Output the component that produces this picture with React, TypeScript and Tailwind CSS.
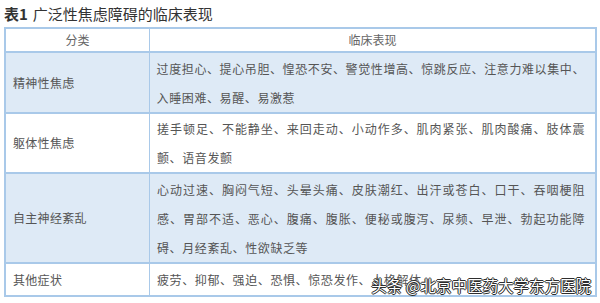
import React from "react";

const font = { fontFamily: '"Noto Sans CJK SC", "Noto Sans", sans-serif' };

type Row = { label: string; lines: string[]; blue: boolean; h: string };

const rows: Row[] = [
  {
    label: "精神性焦虑",
    lines: [
      "过度担心、提心吊胆、惶恐不安、警觉性增高、惊跳反应、注意力难以集中、",
      "入睡困难、易醒、易激惹",
    ],
    blue: true,
    h: "h-[61px]",
  },
  {
    label: "躯体性焦虑",
    lines: [
      "搓手顿足、不能静坐、来回走动、小动作多、肌肉紧张、肌肉酸痛、肢体震",
      "颤、语音发颤",
    ],
    blue: false,
    h: "h-[60px]",
  },
  {
    label: "自主神经紊乱",
    lines: [
      "心动过速、胸闷气短、头晕头痛、皮肤潮红、出汗或苍白、口干、吞咽梗阻",
      "感、胃部不适、恶心、腹痛、腹胀、便秘或腹泻、尿频、早泄、勃起功能障",
      "碍、月经紊乱、性欲缺乏等",
    ],
    blue: true,
    h: "h-[90px]",
  },
  {
    label: "其他症状",
    lines: ["疲劳、抑郁、强迫、恐惧、惊恐发作、人格解体"],
    blue: false,
    h: "h-[31px]",
  },
];

export default function App() {
  return (
    <div className="relative w-[600px] h-[303px] bg-white overflow-hidden" style={font}>
      <div className="pl-[4px] pt-[5px] h-[27px] text-[15px] leading-[18px] text-[#333]">
        <span className="font-bold">表1</span>
        <span className="ml-[5px]">广泛性焦虑障碍的临床表现</span>
      </div>
      <div className="ml-[4px] w-[593px] border-[2px] border-[#a9c9e9] border-t-[2px]">
        <div className="flex h-[24px] border-b-[2px] border-[#a9c9e9] text-[12px] text-[#666]">
          <div className="w-[144px] flex items-center justify-center border-r border-[#a9c9e9]">分类</div>
          <div className="flex-1 flex items-center justify-center">临床表现</div>
        </div>
        {rows.map((r, i) => (
          <div
            key={i}
            className={`flex ${r.h} ${i < rows.length - 1 ? "border-b-[2px] border-[#a9c9e9]" : ""} ${
              r.blue ? "bg-[#deeaf6]" : "bg-white"
            } text-[12px] text-[#555]`}
          >
            <div className="w-[144px] flex items-center pl-[7px] border-r border-[#a9c9e9] tracking-[0.3px]">
              {r.label}
            </div>
            <div className="flex-1 pl-[7px] pr-[10px] flex flex-col justify-center">
              {r.lines.map((l, j) => (
                <div
                  key={j}
                  className={`h-[29px] leading-[29px] whitespace-nowrap tracking-[0.6px] ${
                    j < r.lines.length - 1 ? "text-justify [text-align-last:justify] whitespace-normal" : ""
                  }`}
                >
                  {l}
                </div>
              ))}
            </div>
          </div>
        ))}
      </div>
      <div
        className="absolute right-[9px] bottom-[9px] text-[15.5px] leading-[18px] text-white"
        style={{
          textShadow:
            "0 0 1px #000, 1px 0 0 #333, -1px 0 0 #333, 0 1px 0 #333, 0 -1px 0 #333",
        }}
      >
        头条 @北京中医药大学东方医院
      </div>
    </div>
  );
}
